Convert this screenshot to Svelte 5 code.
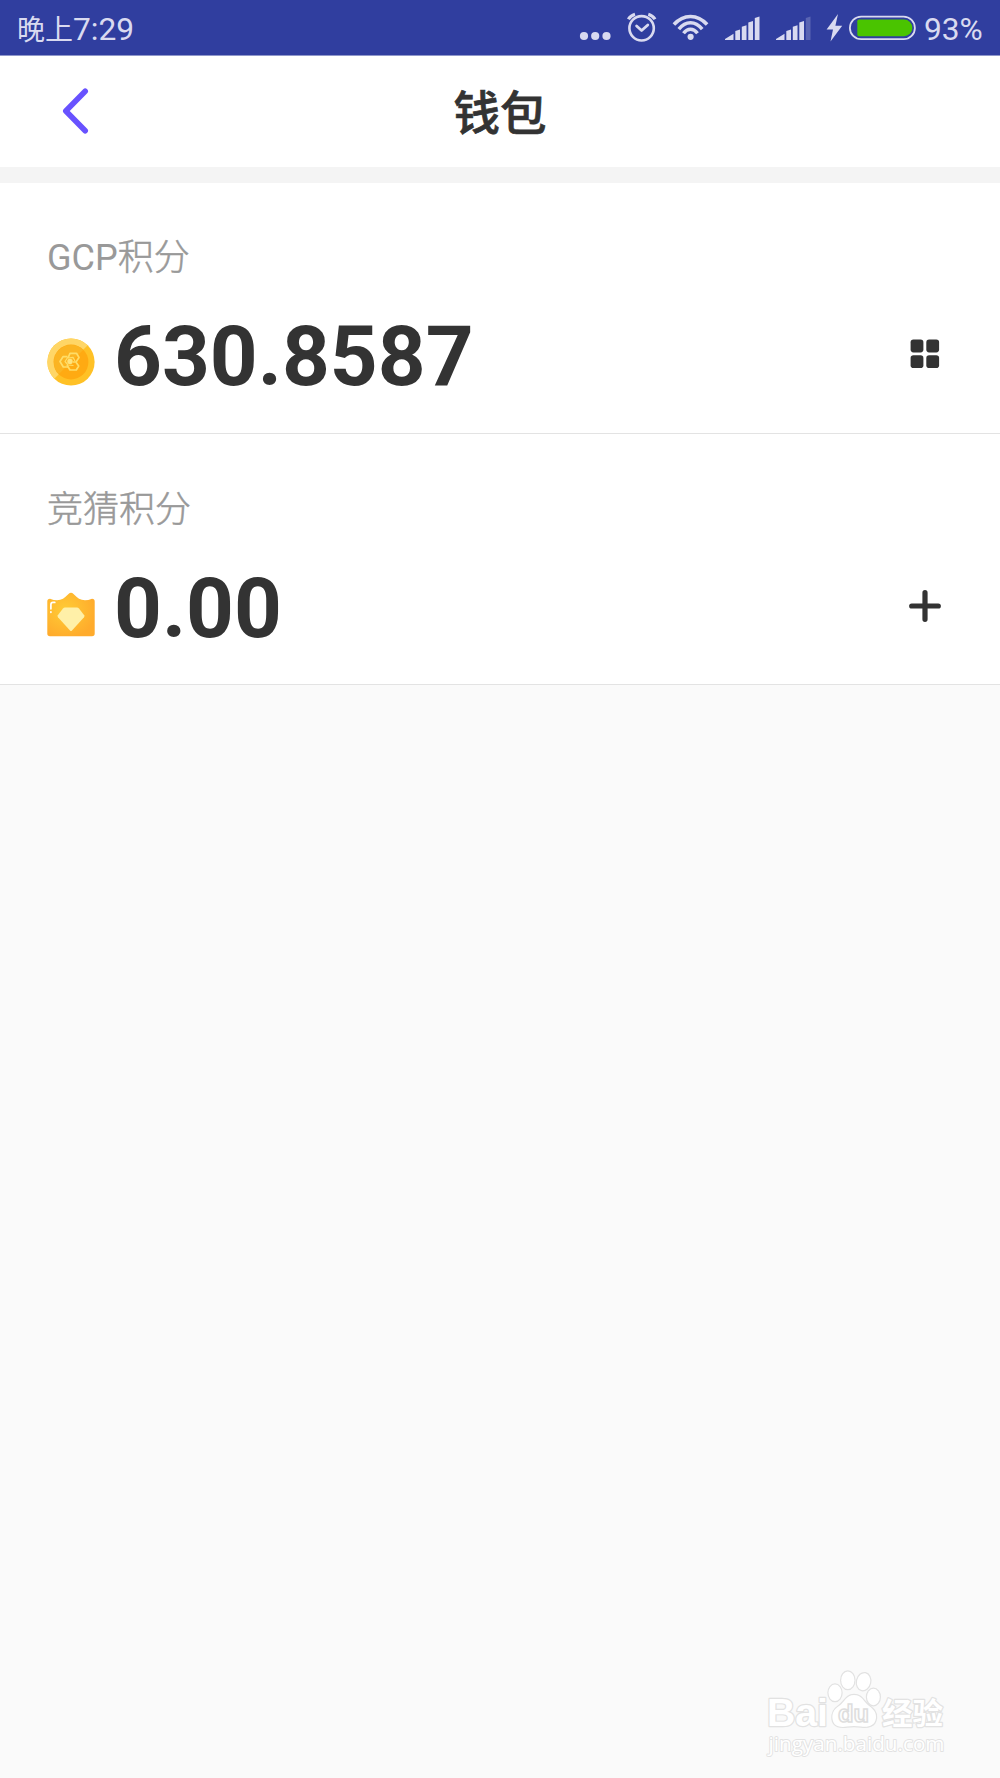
<script>
  const dots = [584, 595.2, 606.5];
  const bars = [0, 1, 2, 3, 4];
  const signals = [
    { x: 725, faded: -1 },
    { x: 776, faded: 4 },
  ];
</script>

<div class="screen">
  <div class="status">
    <div class="time"><span class="cjk">晚上</span>7:29</div>
    <div class="tray">
      <svg class="symbols" width="346" height="55" viewBox="570 0 346 55" aria-hidden="true">
        <g fill="#d9daf0">
          {#each dots as x}
            <circle cx={x} cy="36" r="4.1" />
          {/each}
        </g>
        <g fill="none" stroke="#d9daf0" stroke-linecap="round" stroke-linejoin="round">
          <circle cx="641.6" cy="28.3" r="12.2" stroke-width="2.6" />
          <path d="M636.6 26 L641.6 30.5 L647.8 25" stroke-width="2.8" />
          <path d="M628.4 19.3 Q630.5 15.5 635 14.2 M655 19.3 Q652.8 15.5 648.3 14.2" stroke-width="3.2" stroke-linecap="butt" />
        </g>
        <g fill="none" stroke="#d9daf0" stroke-width="3.5">
          <path d="M673.9 24.5 C683.5 13.7 697.5 13.7 707.1 24.5" />
          <path d="M678.8 29.2 C685.7 20.6 695.3 20.6 702.2 29.2" />
          <path d="M683.5 33.2 C687.5 27.8 693.5 27.8 697.5 33.2" />
        </g>
        <circle cx="690.6" cy="36.8" r="3.1" fill="#d9daf0" />
        {#each signals as s}
          <g transform="translate({s.x} 0)" fill="#d9daf0">
            {#each bars as i}
              {#if i === 0}
                <path d="M0 40 V39 L8.5 33.8 V40 Z" />
              {:else}
                <path
                  d="M{10.3 + (i - 1) * 6.5} 40 V{31 - (i - 1) * 4.3} L{15 + (i - 1) * 6.5} {29.5 - (i - 1) * 4.3} V40 Z"
                  opacity={s.faded === i ? 0.25 : 1}
                />
              {/if}
            {/each}
          </g>
        {/each}
        <path d="M838 14 L826.6 29.4 H833 L830.5 41.5 L842.2 25.8 H835.4 Z" fill="#d9daf0" />
        <rect x="849.9" y="16.6" width="65" height="22.6" rx="11.3" fill="none" stroke="#d9daf0" stroke-width="1.8" />
        <path d="M859 19.6 H904 A8.2 8.2 0 0 1 904 36.2 H859 Q857.3 36.2 857.3 34.5 V21.3 Q857.3 19.6 859 19.6 Z" fill="#4ac400" />
      </svg>
      <span class="percent">93%</span>
    </div>
  </div>

  <header class="header">
    <svg class="back" width="30" height="50" viewBox="0 0 30 50" aria-hidden="true">
      <path d="M25.2 5.3 L5.8 25 L25.2 44.8" fill="none" stroke="#6852ff" stroke-width="5.6" stroke-linecap="round" stroke-linejoin="round" />
    </svg>
    <h1>钱包</h1>
  </header>

  <section class="card">
    <div class="label">GCP<span class="thin">积分</span></div>
    <div class="row">
      <svg class="coin" width="48" height="48" viewBox="0 0 48 48" aria-hidden="true">
        <circle cx="24" cy="24" r="23.6" fill="#ffc126" />
        <path d="M7.3 40.7 A23.6 23.6 0 0 1 40.7 7.3 Z" fill="#ffd666" />
        <circle cx="24" cy="24" r="17.4" fill="#ffaa12" />
        <path d="M11.7 36.3 A17.4 17.4 0 0 1 36.3 11.7 Z" fill="#fbb422" />
        <g fill="none" stroke="#ffdd67" stroke-width="1.7" stroke-linejoin="round">
          <path d="M21 20 L23 15.3 H29.5 L32 19.5 L29 24 H26" />
          <path d="M20.5 18.7 H16 L13 23.5 L16.3 29 H21" />
          <path d="M20 27 L23 32 H29.3 L31.7 28 L29 24.3" />
          <path d="M21 19 L18 23.5 L21 27 L26.5 27.5 M21 20 L26 19.3 L28 23" stroke-width="1.2" />
        </g>
        <circle cx="23" cy="23.5" r="2.7" fill="#ffe37c" />
      </svg>
      <div class="amount">630.8587</div>
      <svg class="action" width="40" height="40" viewBox="0 0 40 40" fill="#333" aria-hidden="true">
        <rect x="5.6" y="5.6" width="12.8" height="12.8" rx="2.8" />
        <rect x="21.3" y="5.6" width="12.8" height="12.8" rx="2.8" />
        <rect x="5.6" y="21.3" width="12.8" height="12.8" rx="2.8" />
        <rect x="21.3" y="21.3" width="12.8" height="12.8" rx="2.8" />
      </svg>
    </div>
  </section>

  <section class="card second">
    <div class="label"><span class="thin">竞猜积分</span></div>
    <div class="row">
      <svg class="coin" width="48" height="48" viewBox="0 0 48 48" aria-hidden="true">
        <defs>
          <radialGradient id="ticket" cx="0.38" cy="0.4" r="0.65">
            <stop offset="0" stop-color="#ffcc35" />
            <stop offset="1" stop-color="#ffab2c" />
          </radialGradient>
        </defs>
        <path d="M3 8.7 Q10.5 11.7 16 8.8 Q18 7.4 21.5 4 Q24 1.7 26.5 4 Q30 7.4 32 8.8 Q37.5 11.7 45 8.7 Q47.7 8.7 47.7 11.5 V43.5 Q47.7 46.3 45 46.3 H3 Q.3 46.3 .3 43.5 V11.5 Q.3 8.7 3 8.7 Z" fill="url(#ticket)" />
        <path d="M18 17.5 H30 Q31.2 17.5 32 18.5 L37.2 25.3 Q37.8 26.3 37 27.2 L25 40.5 Q24 41.6 23 40.5 L11 27.2 Q10.2 26.3 10.8 25.3 L16 18.5 Q16.8 17.5 18 17.5 Z" fill="#fff0a8" />
        <path d="M3.9 18.8 V14.5 Q3.9 12.4 6 12.4 H7.8 M3.9 21.8 V22.3" fill="none" stroke="#fff" stroke-width="1.7" stroke-linecap="round" />
      </svg>
      <div class="amount">0.00</div>
      <svg class="action" width="40" height="40" viewBox="0 0 40 40" aria-hidden="true">
        <path d="M20 6.7 V33.3 M6.7 20 H33.3" stroke="#333" stroke-width="5.2" stroke-linecap="round" />
      </svg>
    </div>
  </section>

  <footer class="footer">
    <svg class="mark" width="220" height="115" viewBox="0 0 220 115">
      <g fill="#fff" stroke="#e2e2e2" stroke-width="2.4" paint-order="stroke" stroke-linejoin="round">
        <text class="brand" x="17" y="70.5" textLength="61" lengthAdjust="spacingAndGlyphs">Bai</text>
        <ellipse cx="85" cy="37.8" rx="6.5" ry="8.3" />
        <ellipse cx="97.8" cy="25.3" rx="6.6" ry="8.8" />
        <ellipse cx="113.6" cy="26.7" rx="6.6" ry="8.6" transform="rotate(12 113.6 26.7)" />
        <ellipse cx="123.4" cy="42" rx="6.4" ry="8.3" />
        <path d="M104 40 C96 40 95 47 89 51 C83 55 82 59 82.5 64 C83.5 72 91 72.5 97 71.5 Q104 70.5 111 71.5 C118 72.5 125 71 126 63 C126.5 57 123 54 118.5 50.5 C113 46 112 40 104 40 Z" />
        <text class="hanzi" x="132" y="68.5" textLength="61" lengthAdjust="spacingAndGlyphs">经验</text>
        <text class="url" x="18.5" y="95.5" textLength="176" lengthAdjust="spacingAndGlyphs">jingyan.baidu.com</text>
      </g>
      <text class="du" x="88" y="66.5" textLength="31" lengthAdjust="spacingAndGlyphs">du</text>
    </svg>
  </footer>
</div>

<style>
  :global(body) {
    margin: 0;
    background: #fafafa;
  }
  .screen {
    box-sizing: border-box;
    width: 1000px;
    height: 1778px;
    display: flex;
    flex-direction: column;
    background: #fafafa;
    color: #333;
    font-family: Roboto, "Noto Sans CJK SC", sans-serif;
    overflow: hidden;
  }
  .status {
    height: 55px;
    flex: none;
    display: flex;
    justify-content: space-between;
    background: #303e9f;
    border-bottom: 1px solid #8f97cb;
    box-sizing: content-box;
    color: #d9daf0;
    font-size: 31.7px;
    line-height: 59px;
    white-space: nowrap;
  }
  .time {
    padding-left: 17px;
  }
  .cjk {
    font-size: 28px;
  }
  .tray {
    display: flex;
    padding-right: 16px;
  }
  .symbols {
    display: block;
  }
  .percent {
    width: 60px;
    padding-left: 8px;
  }
  .header {
    flex: none;
    height: 111px;
    display: grid;
    grid-template-columns: 120px 1fr 120px;
    align-items: center;
    background: #fff;
    border-bottom: 16px solid #f4f4f4;
  }
  .back {
    margin: 0 0 1px 60px;
  }
  h1 {
    margin: 0;
    padding-top: 4px;
    text-align: center;
    font-size: 46.5px;
    line-height: 60px;
    font-weight: 500;
    -webkit-text-stroke: 0.7px #333;
  }
  .card {
    flex: none;
    box-sizing: border-box;
    height: 251px;
    padding: 50px 55px 0 47px;
    background: #fff;
    border-bottom: 1px solid #e3e3e3;
  }
  .second {
    padding-top: 51px;
  }
  .label {
    height: 50px;
    line-height: 50px;
    font-size: 36px;
    color: #999;
  }
  .thin {
    font-weight: 300;
    -webkit-text-stroke: 0.5px #999;
  }
  .row {
    display: flex;
    align-items: center;
    height: 100px;
    margin-top: 21px;
  }
  .coin {
    margin-top: 16px;
  }
  .amount {
    flex: 1;
    margin-left: 19px;
    padding-top: 5px;
    font-size: 83.5px;
    line-height: 100px;
    font-weight: 700;
  }
  .footer {
    display: flex;
    justify-content: flex-end;
    margin-top: auto;
    padding: 0 30px 8px 0;
  }
  .brand {
    font: 700 38px "Liberation Sans", sans-serif;
  }
  .hanzi {
    font: 700 30px "Noto Sans CJK SC", sans-serif;
  }
  .url {
    font: 400 20px "Open Sans", sans-serif;
    stroke-width: 1.8px;
  }
  .du {
    font: 700 23px "Liberation Sans", sans-serif;
    fill: #fff;
    stroke: #dedede;
    stroke-width: 1.5px;
  }
</style>
